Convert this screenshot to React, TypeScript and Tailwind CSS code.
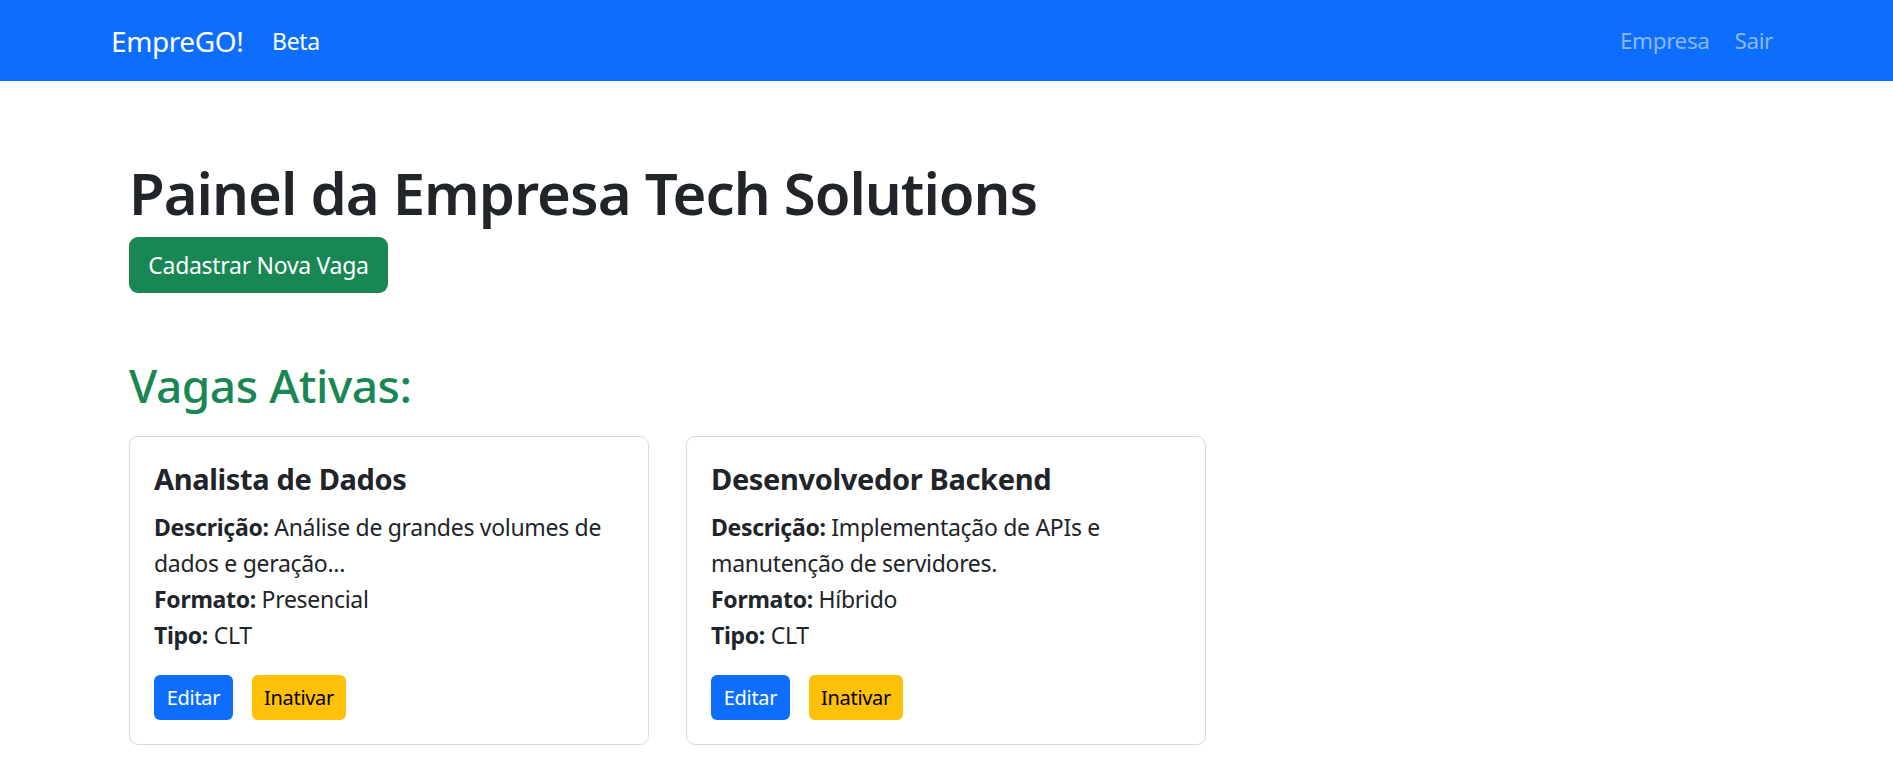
import React from "react";

const vagas = [
  {
    titulo: "Analista de Dados",
    descricao: "Análise de grandes volumes de dados e geração...",
    formato: "Presencial",
    tipo: "CLT",
  },
  {
    titulo: "Desenvolvedor Backend",
    descricao: "Implementação de APIs e manutenção de servidores.",
    formato: "Híbrido",
    tipo: "CLT",
  },
];

const App = () => {
  return (
    <div className="min-h-screen bg-white text-[#212529] font-['Noto_Sans',sans-serif]">
      {/* Navbar */}
      <nav className="h-[81px] bg-[#0d6efd] flex items-center justify-between pl-[111px] pr-[120px]">
        <div className="flex items-center">
          <span className="w-[161px] text-[28px] tracking-[-0.4px] leading-[36px] text-white">EmpreGO!</span>
          <span className="text-[23px] tracking-[-0.3px] leading-[36px] text-white">Beta</span>
        </div>
        <div className="flex items-center gap-[25px] text-[22.5px] tracking-[-0.4px] leading-[36px] text-[#8bb8fe]">
          <span>Empresa</span>
          <span>Sair</span>
        </div>
      </nav>

      {/* Main */}
      <main className="pl-[129px] pt-[76px]">
        <h1 className="text-[58px] tracking-[-1px] leading-[72px] font-semibold">Painel da Empresa Tech Solutions</h1>
        <button className="mt-[8px] h-[56px] w-[259px] flex items-center justify-center rounded-[9px] bg-[#198754] text-white text-[23px] tracking-[-0.3px]">
          Cadastrar Nova Vaga
        </button>

        <h2 className="mt-[63px] text-[46px] tracking-[-0.45px] leading-[58px] font-medium text-[#198754]">Vagas Ativas:</h2>

        <div className="mt-[22px] flex gap-[37px]">
          {vagas.map((v) => (
            <div
              key={v.titulo}
              className="w-[520px] h-[309px] border border-[#dadada] rounded-[9px] px-[24px] pt-[26px]"
            >
              <h5 className="text-[29px] tracking-[-0.35px] leading-[32px] font-bold">{v.titulo}</h5>
              <div className="mt-[14px] text-[23px] tracking-[-0.3px] leading-[36px]">
                <p>
                  <b>Descrição:</b> {v.descricao}
                </p>
                <p>
                  <b>Formato:</b> {v.formato}
                </p>
                <p>
                  <b>Tipo:</b> {v.tipo}
                </p>
              </div>
              <div className="mt-[22px] flex gap-[19px]">
                <button className="h-[45px] w-[79px] flex items-center justify-center rounded-[6px] bg-[#0d6efd] text-white text-[20px] tracking-[-0.3px]">
                  Editar
                </button>
                <button className="h-[45px] w-[94px] flex items-center justify-center rounded-[6px] bg-[#ffc107] text-black text-[20px] tracking-[-0.3px]">
                  Inativar
                </button>
              </div>
            </div>
          ))}
        </div>
      </main>
    </div>
  );
};

export default App;
